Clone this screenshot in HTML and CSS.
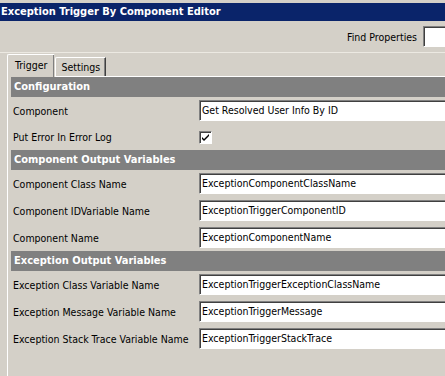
FILE: index.html
```html
<!DOCTYPE html>
<html lang="en">
<head>
<meta charset="UTF-8">
<title>Exception Trigger By Component Editor</title>
<link rel="stylesheet" href="styles.css">
</head>
<body>

<!-- ===== TITLE ===== -->
<div class="titleBar">Exception Trigger By Component Editor</div>

<!-- ===== FIND ===== -->
<div class="findBar">
  <span>Find Properties</span>
  <span class="field findField"></span>
</div>

<!-- ===== TABS ===== -->
<div class="tabs">
  <div class="tab active">Trigger</div>
  <div class="tab">Settings</div>
</div>

<div class="tabPanel">

  <div class="section">Configuration</div>
  <div class="row">
    <div class="label">Component</div>
    <div class="field">Get Resolved User Info By ID</div>
  </div>
  <div class="row check">
    <div class="label">Put Error In Error Log</div>
    <span class="checkbox">
      <svg width="9" height="9" viewBox="0 0 9 9"><path d="M1 4 L3 6 L8 1 L8 3 L3 8 L1 6 Z" fill="#000"/></svg>
    </span>
  </div>

  <div class="section">Component Output Variables</div>
  <div class="row">
    <div class="label">Component Class Name</div>
    <div class="field">ExceptionComponentClassName</div>
  </div>
  <div class="row">
    <div class="label">Component IDVariable Name</div>
    <div class="field">ExceptionTriggerComponentID</div>
  </div>
  <div class="row">
    <div class="label">Component Name</div>
    <div class="field">ExceptionComponentName</div>
  </div>

  <div class="section">Exception Output Variables</div>
  <div class="row">
    <div class="label">Exception Class Variable Name</div>
    <div class="field">ExceptionTriggerExceptionClassName</div>
  </div>
  <div class="row">
    <div class="label">Exception Message Variable Name</div>
    <div class="field">ExceptionTriggerMessage</div>
  </div>
  <div class="row">
    <div class="label">Exception Stack Trace Variable Name</div>
    <div class="field">ExceptionTriggerStackTrace</div>
  </div>

</div>

</body>
</html>
```

FILE: styles.css
```css
body {
  margin: 0;
  width: 445px;
  height: 376px;
  overflow: hidden;
  background: #d4d0c8;
  font-family: "DejaVu Sans Condensed", "DejaVu Sans", sans-serif;
  font-size: 10.5px;
  color: #000;
}

/* ===== TITLE ===== */
.titleBar {
  margin-top: 3px;
  height: 18px;
  line-height: 18px;
  padding-left: 1px;
  background: #0a246a;
  color: #fff;
  font-size: 11px;
  font-weight: bold;
  white-space: nowrap;
}

/* ===== FIND ===== */
.findBar {
  height: 31px;
  display: flex;
  justify-content: flex-end;
  align-items: center;
  gap: 6px;
  border-bottom: 1px solid #ece9e2;
  white-space: nowrap;
}

.findBar .findField {
  width: 22px;
  flex: none;
  margin-right: -4px;
}

/* ===== TABS ===== */
.tabs {
  display: flex;
  align-items: flex-end;
  height: 23px;
  padding-left: 7px;
}

.tab {
  height: 18px;
  line-height: 19px;
  padding: 0 5px 0 5px;
  border-top: 1px solid #fff;
  border-left: 1px solid #fff;
  border-right: 1px solid #404040;
  box-shadow: inset -1px 0 #808080;
  border-top-left-radius: 2px;
  position: relative;
}

.tab.active {
  height: 22px;
  line-height: 21px;
  padding: 0 7px 0 7px;
  margin-bottom: -1px;
  background: #d4d0c8;
  border-right: 1px solid #d4d0c8;
  z-index: 1;
}

/* ===== PANEL ===== */
.tabPanel {
  margin-left: 7px;
  border-top: 1px solid #fff;
  border-left: 1px solid #fff;
  padding-left: 3px;
  height: 300px;
}

.section {
  height: 20px;
  line-height: 20px;
  padding-left: 3px;
  background: #808080;
  color: #fff;
  font-size: 11px;
  font-weight: bold;
  white-space: nowrap;
}

.row {
  height: 27px;
  display: flex;
  align-items: center;
}

.row.check {
  height: 26px;
}

.label {
  width: 186px;
  flex: none;
  padding-left: 2px;
  white-space: nowrap;
}

.field {
  flex: 1;
  height: 19px;
  line-height: 19px;
  padding-left: 2px;
  background: #fff;
  border: 1px solid;
  border-color: #808080 #fff #fff #808080;
  box-shadow: inset 1px 1px #404040;
  white-space: nowrap;
  overflow: hidden;
  margin-right: -4px;
}

.checkbox {
  width: 11px;
  height: 11px;
  background: #fff;
  border: 1px solid;
  border-color: #808080 #fff #fff #808080;
  box-shadow: inset 1px 1px #404040;
  display: flex;
  align-items: center;
  justify-content: center;
}
```
